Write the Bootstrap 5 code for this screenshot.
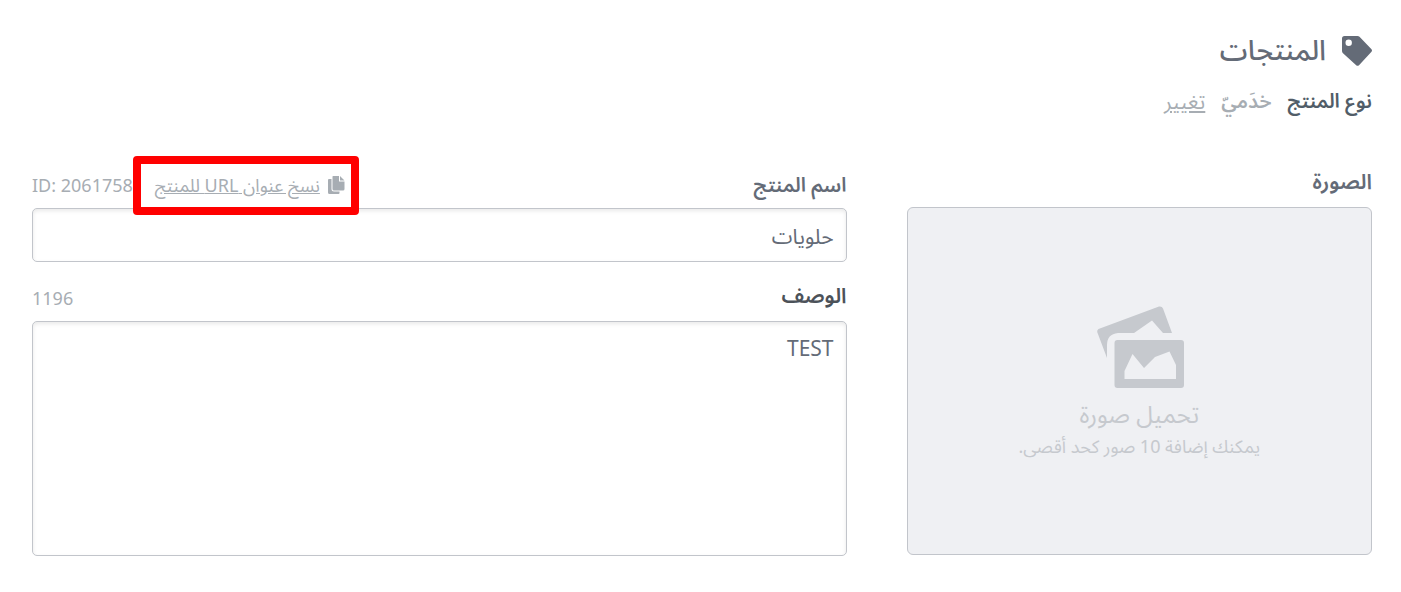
<!DOCTYPE html>
<html lang="ar" dir="rtl">
<head>
<meta charset="utf-8">
<meta name="viewport" content="width=device-width, initial-scale=1">
<title>المنتجات</title>
<link href="https://cdn.jsdelivr.net/npm/bootstrap@5.3.0/dist/css/bootstrap.min.css" rel="stylesheet">
<style>
  body { font-family: "Noto Sans", "Noto Sans Arabic", "DejaVu Sans", sans-serif; color: #646b77; background: #fff; }
  .page { padding: 32px 29px 32px 32px; }
  .page-title { font-size: 28px; line-height: 34px; font-weight: 500; }
  .type-row { font-size: 20px; line-height: 30px; margin-top: 20px; color: #a7adb3; }
  .type-row .type-name { color: #515d68; }
  .type-row .soft-link { font-size: 21px; }
  .soft-link, .soft-link:hover { color: #a7adb3; text-decoration: underline; }
  .editor { display: grid; grid-template-columns: 4fr 7fr; column-gap: 60px; margin-top: 46px; }
  .field-head { height: 46px; padding-top: 4px; }
  .image-head { height: 45px; }
  .field-label { font-size: 20px; line-height: 30px; font-weight: 600; }
  .image-head .field-label, .label-dark { font-size: 21px; }
  .label-dark { color: #4c5259; }
  .meta { font-size: 18px; line-height: 24px; color: #a7adb3; }
  .field-box, .field-box:focus { color: #646b77; font-size: 21px; line-height: 30px; padding: 11px 12px; border: 1px solid #c2c5cb; border-radius: 5px; box-shadow: inset 0 2px 4px rgba(0,0,0,.09); }
  .name-box, .name-box:focus { height: 54px; padding-top: 13px; padding-bottom: 9px; }
  .text-box { height: 235px; resize: none; }
  .between { margin-top: 18px; margin-bottom: 11px; }
  .upload { height: 348px; background: #eff0f3; border: 1px solid #c2c5cb; border-radius: 6px; color: #c6c9ce; }
  .upload-title { font-size: 24px; line-height: 34px; margin-top: 8px; }
  .upload-note { font-size: 18px; line-height: 30px; }
  .highlight { border: 8px solid #f00; border-radius: 4px; height: 59px; padding: 0 6px 0 14px; position: relative; z-index: 1; }
  .head-meta { margin-top: -4px; }
</style>
</head>
<body>
<main class="page">
  <h1 class="page-title d-flex align-items-center gap-3 mb-0">
    <svg class="mt-1" width="30" height="30" viewBox="0 0 30 30" aria-hidden="true"><path fill="#646b77" fill-rule="evenodd" d="M2.500 0H15.500Q16.700 0 17.500.8L29.500 13.200Q30.500 14.500 29.500 15.700L17 29.200Q15.500 30.500 14.200 29.200L1 17.300Q0 16.400 0 15V2.500Q0 0 2.500 0ZM6.700 3.500a3.200 3.200 0 1 0 0 6.400a3.200 3.200 0 1 0 0-6.400Z"/></svg>
    <span>المنتجات</span>
  </h1>
  <div class="type-row d-flex align-items-center">
    <strong class="type-name fw-semibold">نوع المنتج</strong>
    <strong class="fw-semibold mx-3">خدَميّ</strong>
    <a class="soft-link" href="#">تغيير</a>
  </div>
  <div class="editor">
    <section>
      <div class="field-head image-head"><label class="field-label" for="upload">الصورة</label></div>
      <button id="upload" type="button" class="upload w-100 d-flex flex-column align-items-center justify-content-center">
        <svg class="mt-1" width="91" height="83" viewBox="-3 0 91 83" aria-hidden="true">
          <path fill="#c6c9ce" d="M1.500 23L62 .5Q65 0 66 2.500L75 27H66L55 14.500L37 27H21Q10 28 10 39V52L.2 26Q0 24 1.500 23Z"/>
          <path fill="#c6c9ce" fill-rule="evenodd" d="M20.500 34H84Q87 34 87 37V79Q87 82 84 82H20.500Q17.500 82 17.500 79V37Q17.500 34 20.500 34ZM27.500 73H79V59L72.500 45.500L58 51L47 62L35.500 48L27.500 65Z"/>
        </svg>
        <span class="upload-title">تحميل صورة</span>
        <span class="upload-note">يمكنك إضافة 10 صور كحد أقصى.</span>
      </button>
    </section>
    <section>
      <div class="field-head d-flex justify-content-between">
        <label class="field-label pt-1" for="product-name">اسم المنتج</label>
        <div class="meta head-meta d-flex align-items-center align-self-center">
          <span class="highlight d-flex align-items-center gap-2">
            <svg width="17" height="18" viewBox="0 0 17 18" aria-hidden="true"><path fill="#a7adb3" d="M5 0H11V5.500H16.500V13Q16.500 14.500 15 14.500H6Q4.500 14.500 4.500 13V1Q4.500 0 5 0ZM12 0L16.500 4.500H12ZM0 4Q0 3 1 3H3.500V13Q3.500 15.500 6 15.500H11.500V17Q11.500 18 10.500 18H1.500Q0 18 0 16.500Z"/></svg>
            <a class="soft-link" href="#">نسخ عنوان URL للمنتج</a>
          </span>
          <span dir="ltr">ID: 2061758</span>
        </div>
      </div>
      <input id="product-name" class="form-control field-box name-box" type="text" value="حلويات">
      <div class="between d-flex justify-content-between align-items-end">
        <label class="field-label label-dark" for="description">الوصف</label>
        <span class="meta">1196</span>
      </div>
      <textarea id="description" class="form-control field-box text-box">TEST</textarea>
    </section>
  </div>
</main>
<script src="https://cdn.jsdelivr.net/npm/bootstrap@5.3.0/dist/js/bootstrap.bundle.min.js"></script>
</body>
</html>
